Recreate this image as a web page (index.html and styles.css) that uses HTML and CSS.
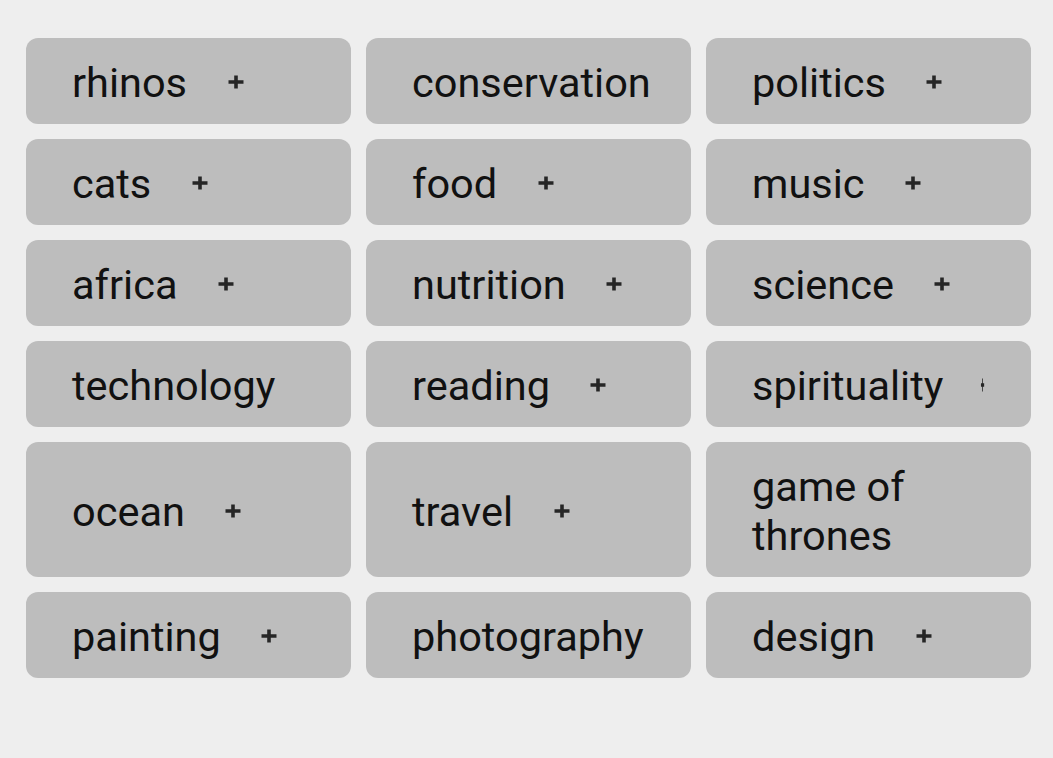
FILE: index.html
```html
<!DOCTYPE html>
<html>
<head>
<meta charset="utf-8">
<link rel="stylesheet" href="styles.css">
</head>
<body>
<div class="grid">
  <div class="chip"><span class="label">rhinos</span><svg class="plus" viewBox="0 0 24 24" preserveAspectRatio="none"><path d="M12 5.5v13M4.5 12h15"/></svg></div>
  <div class="chip"><span class="label">conservation</span><svg class="plus" viewBox="0 0 24 24" preserveAspectRatio="none"><path d="M12 5.5v13M4.5 12h15"/></svg></div>
  <div class="chip"><span class="label">politics</span><svg class="plus" viewBox="0 0 24 24" preserveAspectRatio="none"><path d="M12 5.5v13M4.5 12h15"/></svg></div>
  <div class="chip"><span class="label">cats</span><svg class="plus" viewBox="0 0 24 24" preserveAspectRatio="none"><path d="M12 5.5v13M4.5 12h15"/></svg></div>
  <div class="chip"><span class="label">food</span><svg class="plus" viewBox="0 0 24 24" preserveAspectRatio="none"><path d="M12 5.5v13M4.5 12h15"/></svg></div>
  <div class="chip"><span class="label">music</span><svg class="plus" viewBox="0 0 24 24" preserveAspectRatio="none"><path d="M12 5.5v13M4.5 12h15"/></svg></div>
  <div class="chip"><span class="label">africa</span><svg class="plus" viewBox="0 0 24 24" preserveAspectRatio="none"><path d="M12 5.5v13M4.5 12h15"/></svg></div>
  <div class="chip"><span class="label">nutrition</span><svg class="plus" viewBox="0 0 24 24" preserveAspectRatio="none"><path d="M12 5.5v13M4.5 12h15"/></svg></div>
  <div class="chip"><span class="label">science</span><svg class="plus" viewBox="0 0 24 24" preserveAspectRatio="none"><path d="M12 5.5v13M4.5 12h15"/></svg></div>
  <div class="chip"><span class="label">technology</span><svg class="plus" viewBox="0 0 24 24" preserveAspectRatio="none"><path d="M12 5.5v13M4.5 12h15"/></svg></div>
  <div class="chip"><span class="label">reading</span><svg class="plus" viewBox="0 0 24 24" preserveAspectRatio="none"><path d="M12 5.5v13M4.5 12h15"/></svg></div>
  <div class="chip"><span class="label">spirituality</span><svg class="plus" viewBox="0 0 24 24" preserveAspectRatio="none"><path d="M12 5.5v13M4.5 12h15"/></svg></div>
  <div class="chip"><span class="label">ocean</span><svg class="plus" viewBox="0 0 24 24" preserveAspectRatio="none"><path d="M12 5.5v13M4.5 12h15"/></svg></div>
  <div class="chip"><span class="label">travel</span><svg class="plus" viewBox="0 0 24 24" preserveAspectRatio="none"><path d="M12 5.5v13M4.5 12h15"/></svg></div>
  <div class="chip"><span class="label wrap">game of thrones</span><svg class="plus" viewBox="0 0 24 24" preserveAspectRatio="none"><path d="M12 5.5v13M4.5 12h15"/></svg></div>
  <div class="chip"><span class="label">painting</span><svg class="plus" viewBox="0 0 24 24" preserveAspectRatio="none"><path d="M12 5.5v13M4.5 12h15"/></svg></div>
  <div class="chip"><span class="label">photography</span><svg class="plus" viewBox="0 0 24 24" preserveAspectRatio="none"><path d="M12 5.5v13M4.5 12h15"/></svg></div>
  <div class="chip"><span class="label">design</span><svg class="plus" viewBox="0 0 24 24" preserveAspectRatio="none"><path d="M12 5.5v13M4.5 12h15"/></svg></div>
</div>
</body>
</html>
```
FILE: styles.css
```css
html, body {
  margin: 0;
  background: #eeeeee;
}
body {
  padding: 38px 22px 0 26px;
  font-family: Roboto, "Noto Sans", sans-serif;
}
.grid {
  display: grid;
  grid-template-columns: repeat(3, 325px);
  gap: 15px;
}
.chip {
  background: #bdbdbd;
  border-radius: 12px;
  padding: 21px 46px 17px 46px;
  display: flex;
  align-items: center;
  min-height: 48px;
  overflow: hidden;
}
.label {
  font-size: 41.5px;
  line-height: 48px;
  color: #111111;
  white-space: nowrap;
  flex-shrink: 0;
}
.label.wrap {
  white-space: normal;
  flex: none;
  width: 233px;
  line-height: 48.5px;
}
.plus {
  width: 24px;
  height: 24px;
  margin-left: 36.5px;
  margin-top: -2px;
  flex-shrink: 1;
  min-width: 0;
  fill: none;
  stroke: #262626;
  stroke-width: 3.6;
}
```
